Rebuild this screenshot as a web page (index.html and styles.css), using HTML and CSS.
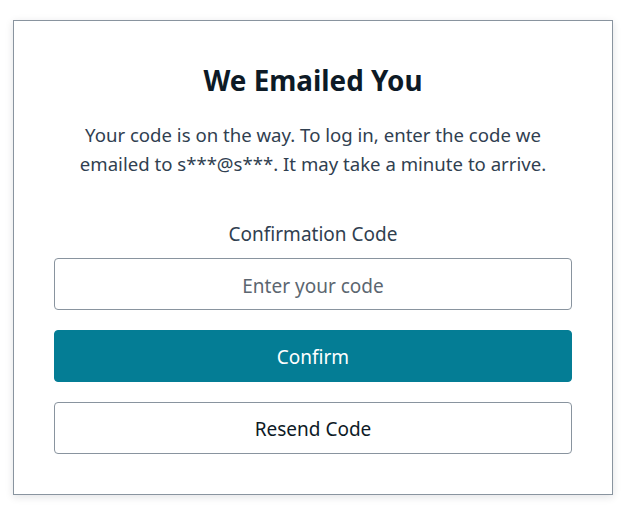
FILE: index.html
```html
<!DOCTYPE html>
<html lang="en">
<head>
<meta charset="utf-8">
<title>We Emailed You</title>
<link rel="stylesheet" href="styles.css">
</head>
<body>
<main class="card">
  <h3 class="title">We Emailed You</h3>
  <p class="text">Your code is on the way. To log in, enter the code we emailed to s***@s***. It may take a minute to arrive.</p>
  <form class="form">
    <label class="field">
      <span class="label">Confirmation Code</span>
      <input class="input" type="text" placeholder="Enter your code">
    </label>
    <button class="btn btn-primary" type="button">Confirm</button>
    <button class="btn btn-secondary" type="button">Resend Code</button>
  </form>
</main>
</body>
</html>
```
FILE: styles.css
```css
* { box-sizing: border-box; }
html, body { margin: 0; background: #fff; }
body {
  padding: 20px 23px 16px 13px;
  font-family: "Noto Sans", "Open Sans", sans-serif;
  color: #0d1a26;
}
.card {
  width: 600px;
  height: 475px;
  border: 1px solid #89949f;
  box-shadow: 0 2px 8px rgba(13, 26, 38, 0.12);
  padding: 42px 40px 40px;
  display: flex;
  flex-direction: column;
  text-align: center;
}
.title {
  margin: 0;
  font-size: 27.8px;
  line-height: 34px;
  font-weight: 700;
  color: #0d1a26;
}
.text {
  margin: 23px 0 0;
  font-size: 18.6px;
  line-height: 29px;
  color: #304050;
}
.form {
  margin-top: 43px;
  display: flex;
  flex-direction: column;
  gap: 20px;
}
.field {
  display: flex;
  flex-direction: column;
  gap: 10px;
}
.label {
  font-size: 19px;
  line-height: 27px;
  color: #304050;
}
.input {
  height: 52px;
  padding: 3px 12px 0;
  border: 1px solid #89949f;
  border-radius: 4px;
  font: inherit;
  font-size: 19px;
  text-align: center;
  color: #0d1a26;
  background: #fff;
  outline: none;
}
.input::placeholder { color: #5c6670; }
.btn {
  height: 52px;
  padding: 2px 12px 0;
  border-radius: 4px;
  font: inherit;
  font-size: 19px;
  cursor: pointer;
}
.btn-primary {
  background: #047d95;
  border: 1px solid #047d95;
  color: #fff;
}
.btn-secondary {
  background: #fff;
  border: 1px solid #89949f;
  color: #0d1a26;
}
```
